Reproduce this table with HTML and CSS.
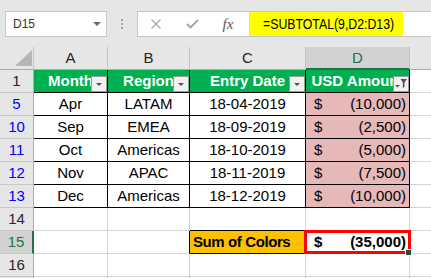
FILE: index.html
```html
<!DOCTYPE html>
<html lang="en">
<head>
<meta charset="utf-8">
<title>Sum of Colors</title>
<link rel="stylesheet" href="styles.css">
</head>
<body>
<div class="app">
  <div class="formula-bar">
    <div class="name-box">
      <span>D15</span>
      <svg class="nb-arrow" width="8" height="4" viewBox="0 0 8 4"><polygon points="0,0 8,0 4,4"/></svg>
    </div>
    <div class="grip"><i></i><i></i><i></i></div>
    <div class="fx-group">
      <span class="fbtn">
        <svg width="12" height="10" viewBox="0 0 12 10"><path d="M1.5 0.5 L10.5 9.5 M10.5 0.5 L1.5 9.5" stroke="#a8a8a8" stroke-width="1.3" fill="none"/></svg>
      </span>
      <span class="fbtn">
        <svg width="13" height="10" viewBox="0 0 13 10"><path d="M1 5 L4.5 8.5 L12 1" stroke="#a8a8a8" stroke-width="2" fill="none"/></svg>
      </span>
      <span class="fbtn fx">fx</span>
      <div class="formula"><span class="formula-text"><span class="formula-chars">=SUBTOTAL(9,D2:D13)</span></span></div>
    </div>
  </div>

  <div class="sheet">
    <!-- column headers -->
    <div class="ch corner"><svg class="corner-tri" width="17" height="16" viewBox="0 0 17 16"><polygon points="0,16 17,16 17,0"/></svg></div>
    <div class="ch">A</div>
    <div class="ch">B</div>
    <div class="ch">C</div>
    <div class="ch active">D</div>
    <div class="ch e"></div>

    <!-- row 1: table header -->
    <div class="rh">1</div>
    <div class="th">Month<span class="fbox"><svg width="14" height="14" viewBox="0 0 14 14"><polygon points="4,6 10,6 7,9"/></svg></span></div>
    <div class="th">Region<span class="fbox"><svg width="14" height="14" viewBox="0 0 14 14"><polygon points="4,6 10,6 7,9"/></svg></span></div>
    <div class="th">Entry Date<span class="fbox"><svg width="14" height="14" viewBox="0 0 14 14"><polygon points="4,6 10,6 7,9"/></svg></span></div>
    <div class="th">USD Amount<span class="fbox"><svg width="14" height="14" viewBox="0 0 14 14"><polygon points="1,8 6,8 3.5,10.5"/><polygon points="6.5,2 13,2 10.5,5.5 10.5,10 8.8,11 8.8,5.5"/></svg></span></div>
    <div class="c e"></div>

    <div class="rh filtered">5</div>
    <div class="td">Apr</div>
    <div class="td">LATAM</div>
    <div class="td">18-04-2019</div>
    <div class="td amt"><span>$</span><span>(10,000)</span></div>
    <div class="c e"></div>

    <div class="rh filtered">10</div>
    <div class="td">Sep</div>
    <div class="td">EMEA</div>
    <div class="td">18-09-2019</div>
    <div class="td amt"><span>$</span><span>(2,500)</span></div>
    <div class="c e"></div>

    <div class="rh filtered">11</div>
    <div class="td">Oct</div>
    <div class="td">Americas</div>
    <div class="td">18-10-2019</div>
    <div class="td amt"><span>$</span><span>(5,000)</span></div>
    <div class="c e"></div>

    <div class="rh filtered">12</div>
    <div class="td">Nov</div>
    <div class="td">APAC</div>
    <div class="td">18-11-2019</div>
    <div class="td amt"><span>$</span><span>(7,500)</span></div>
    <div class="c e"></div>

    <div class="rh filtered">13</div>
    <div class="td">Dec</div>
    <div class="td">Americas</div>
    <div class="td">18-12-2019</div>
    <div class="td amt"><span>$</span><span>(10,000)</span></div>
    <div class="c e"></div>

    <div class="rh">14</div>
    <div class="c"></div>
    <div class="c"></div>
    <div class="c edge-bottom"></div>
    <div class="c"></div>
    <div class="c e"></div>

    <div class="rh active">15</div>
    <div class="c"></div>
    <div class="c edge-right"></div>
    <div class="c sum-label">Sum of Colors</div>
    <div class="c sum-value"><span>$</span><span>(35,000)</span></div>
    <div class="c e"></div>

    <div class="rh">16</div>
    <div class="c"></div>
    <div class="c"></div>
    <div class="c"></div>
    <div class="c"></div>
    <div class="c e"></div>

    <div class="rh"></div>
    <div class="c"></div>
    <div class="c"></div>
    <div class="c"></div>
    <div class="c"></div>
    <div class="c e"></div>
  </div>
</div>
</body>
</html>
```

FILE: styles.css
```css
* {
  box-sizing: border-box;
  margin: 0;
  padding: 0;
}

html,
body {
  width: 431px;
  height: 278px;
  overflow: hidden;
  background: #ffffff;
}

body {
  font-family: "Liberation Sans", Arial, sans-serif;
  color: #000;
}

/* ---------- formula bar ---------- */
.formula-bar {
  height: 47px;
  background: #e6e6e6;
  display: flex;
  align-items: flex-start;
  padding: 11px 0 0 5px;
}

.name-box {
  width: 102px;
  height: 26px;
  background: #fff;
  border: 1px solid #c6c6c6;
  display: flex;
  align-items: center;
  justify-content: space-between;
  padding: 0 5px 0 7px;
  font-size: 12px;
  color: #333;
}

.nb-arrow {
  fill: #6b6b6b;
}

.grip {
  width: 30px;
  display: flex;
  flex-direction: column;
  align-items: center;
  gap: 2px;
  padding-top: 8px;
}

.grip i {
  display: block;
  width: 2px;
  height: 2px;
  background: #a3a3a3;
}

.fx-group {
  flex: 1;
  height: 26px;
  background: #fff;
  border: 1px solid #c6c6c6;
  border-right: none;
  display: flex;
  align-items: stretch;
}

.fbtn {
  width: 36px;
  display: flex;
  align-items: center;
  justify-content: center;
}

.fx {
  width: 39px;
  font-family: "Liberation Serif", serif;
  font-style: italic;
  font-size: 15px;
  color: #5a5a5a;
  padding-right: 3px;
}

.formula {
  flex: 1;
  border-left: 1px solid #dadada;
  display: flex;
}

.formula-text {
  width: 153px;
  background: #ffff00;
  font-size: 15px;
  line-height: 24px;
  padding-left: 13px;
  white-space: nowrap;
  overflow: hidden;
}

/* condensed face for the formula text */
.formula-chars {
  display: inline-block;
  transform: scaleX(0.82);
  transform-origin: left center;
}

/* ---------- worksheet grid ---------- */
.sheet {
  display: grid;
  grid-template-columns: 34px 74px 82px 116px 104px 21px;
  grid-auto-rows: 23px;
  height: 231px;
  overflow: hidden;
}

.sheet > div {
  border-right: 1px solid #d4d4d4;
  border-bottom: 1px solid #d4d4d4;
  font-size: 15px;
  line-height: 22px;
  text-align: center;
  white-space: nowrap;
  position: relative;
}

.sheet > .e {
  border-right: none;
}

/* column headers */
.sheet > .ch {
  background: #e6e6e6;
  color: #262626;
  border-right-color: #c3c3c3;
  border-bottom-color: #ababab;
}

.sheet > .ch.active {
  background: #d2d2d2;
  color: #217346;
  border-bottom: 2px solid #217346;
}

.corner-tri {
  position: absolute;
  left: 15px;
  top: 3px;
  fill: #b6b6b6;
}

/* row headers */
.sheet > .rh {
  background: #e6e6e6;
  color: #262626;
  border-right-color: #ababab;
  border-bottom-color: #c8c8c8;
}

.sheet > .rh.filtered {
  color: #0000ff;
}

.sheet > .rh.active {
  background: #d2d2d2;
  color: #217346;
  border-right: 2px solid #217346;
}

/* table header row */
.sheet > .th {
  background: #00b050;
  color: #fff;
  font-weight: bold;
  border-right-color: #000;
  border-bottom-color: #000;
}

.fbox {
  position: absolute;
  right: 0;
  bottom: 0;
  width: 16px;
  height: 16px;
  background: #f1f1f1;
  border: 1px solid #9c9c9c;
  display: flex;
}

.fbox svg {
  fill: #555;
}

/* table body */
.sheet > .td {
  border-right-color: #000;
  border-bottom-color: #000;
}

.sheet > .amt {
  background: #e6b8b7;
  display: flex;
  justify-content: space-between;
  padding: 0 3px 0 8px;
}

/* summary row */
.sheet > .edge-bottom {
  border-bottom-color: #000;
}

.sheet > .edge-right {
  border-right-color: #000;
}

.sheet > .sum-label {
  background: #ffc000;
  font-weight: bold;
  text-align: left;
  padding-left: 3px;
  letter-spacing: -0.4px;
  border-right-color: #000;
  border-bottom-color: #000;
}

.sheet > .sum-value {
  font-weight: bold;
  display: flex;
  justify-content: space-between;
  padding: 0 3px 0 8px;
}

/* active cell selection */
.sum-value::after {
  content: "";
  position: absolute;
  top: -1px;
  left: -2px;
  right: -2px;
  bottom: -1px;
  border: 3px solid #ff0000;
}

.sum-value::before {
  content: "";
  position: absolute;
  right: -3px;
  bottom: -3px;
  width: 5px;
  height: 5px;
  background: #1e4e32;
  border: 1px solid #fff;
  z-index: 1;
}
```
